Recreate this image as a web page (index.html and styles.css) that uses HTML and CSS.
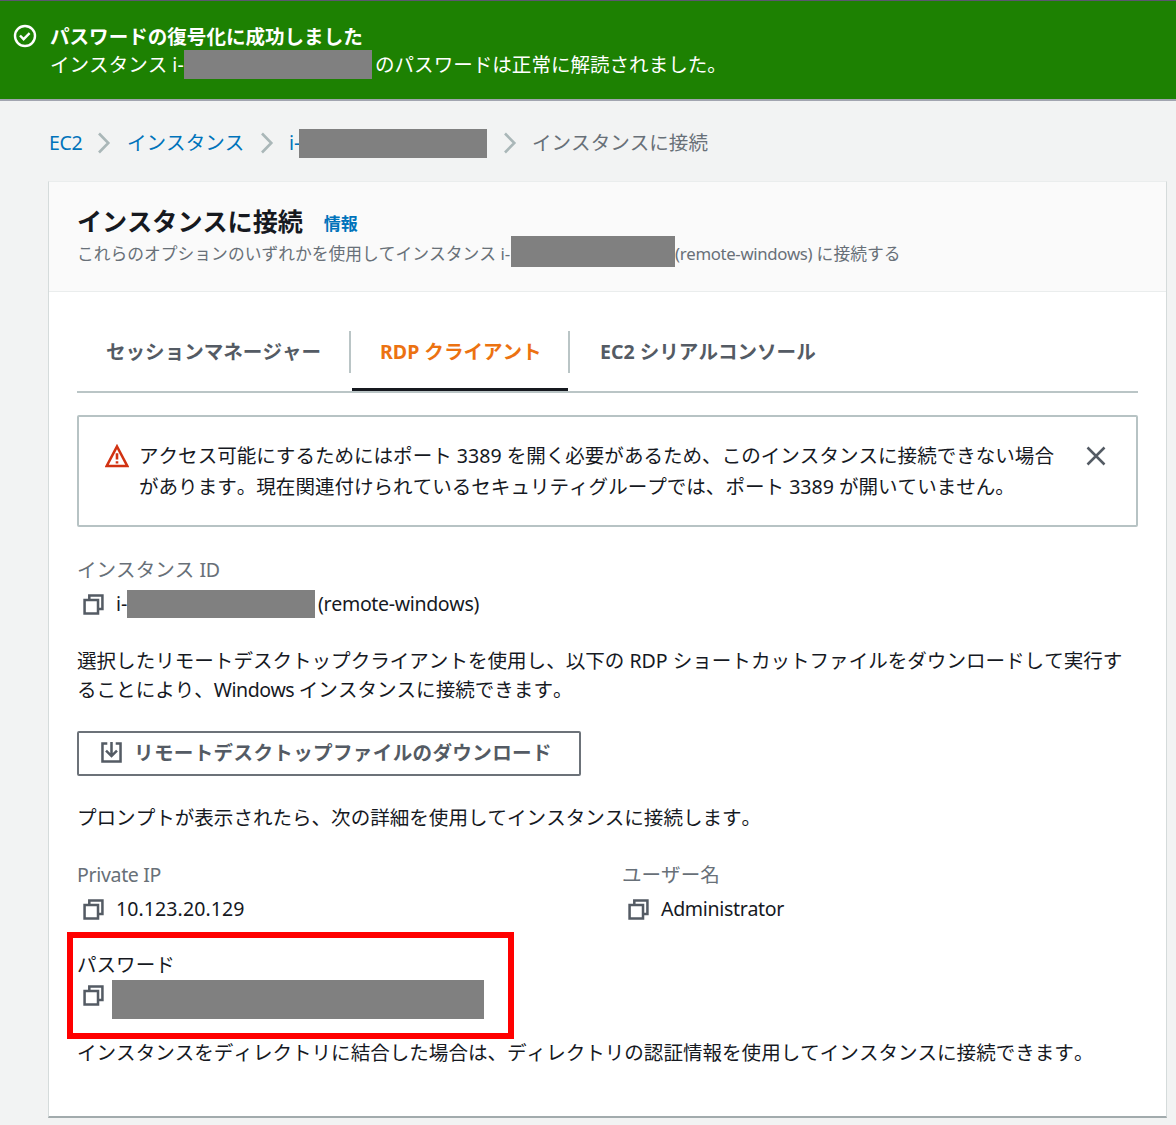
FILE: index.html
```html
<!DOCTYPE html>
<html lang="ja">
<head>
<meta charset="utf-8">
<title>インスタンスに接続</title>
<link rel="stylesheet" href="styles.css">
</head>
<body>
<svg class="sprite" aria-hidden="true">
  <symbol id="copy" viewBox="0 0 20 20"><path d="M1.5 5.7h12.8v12.8H1.5zM6 5V1.5h12.5v12.7h-3.6" fill="none" stroke="#545b64" stroke-width="2.4"/></symbol>
  <symbol id="chevron" viewBox="0 0 14 22"><path d="M2 1.5 11.3 11 2 20.5" fill="none" stroke="#aab7b8" stroke-width="2.6"/></symbol>
</svg>

<div class="flash">
  <svg class="flash-icon" viewBox="0 0 24 24" fill="none" stroke="#fff" stroke-width="2.4"><circle cx="12" cy="12" r="10"/><path d="m7 11.5 3.6 3.7 6-6"/></svg>
  <div class="flash-text">
    <div class="line strong"><span class="t">パスワードの復号化に成功しました</span></div>
    <div class="line"><span class="t flash-lead">インスタンス i-</span><span class="mask mask-flash"></span><span class="t flash-tail">のパスワードは正常に解読されました。</span></div>
  </div>
</div>

<nav class="crumbs">
  <a class="t crumb-ec2">EC2</a>
  <svg class="chevron"><use href="#chevron"/></svg>
  <a class="t crumb-list">インスタンス</a>
  <svg class="chevron"><use href="#chevron"/></svg>
  <a class="t crumb-id">i-</a><span class="mask mask-crumb"></span>
  <svg class="chevron"><use href="#chevron"/></svg>
  <span class="t">インスタンスに接続</span>
</nav>

<main class="card">
  <header class="card-header">
    <div class="title-row"><h1>インスタンスに接続</h1><a class="info">情報</a></div>
    <div class="subtitle"><span class="t sub-lead">これらのオプションのいずれかを使用してインスタンス i-</span><span class="mask mask-sub"></span><span class="t"><span class="latin">(remote-windows)</span> に接続する</span></div>
  </header>

  <div class="card-body">
    <div class="tabs">
      <div class="tab tab-session"><span>セッションマネージャー</span></div>
      <div class="tab tab-rdp active"><span>RDP クライアント</span></div>
      <div class="tab tab-serial"><span>EC2 シリアルコンソール</span></div>
    </div>

    <div class="alert">
      <svg class="alert-icon" viewBox="0 0 24 24"><path d="M12 2.5 22.3 22H1.7z" fill="none" stroke="#d13212" stroke-width="2.6"/><path d="M12 9.2v6.2M12 17.2v2.4" stroke="#d13212" stroke-width="2.6"/></svg>
      <p class="alert-text">アクセス可能にするためにはポート 3389 を開く必要があるため、このインスタンスに接続できない場合<br>があります。現在関連付けられているセキュリティグループでは、ポート 3389 が開いていません。</p>
      <svg class="close" viewBox="0 0 20 20"><path d="m1.5 1.5 17 17m0-17-17 17" stroke="#545b64" stroke-width="2.5"/></svg>
    </div>

    <div class="field field-id">
      <div class="label">インスタンス <span class="latin">ID</span></div>
      <div class="value"><svg class="copy"><use href="#copy"/></svg><span class="t value-id">i-</span><span class="mask mask-id"></span><span class="t value-name latin">(remote-windows)</span></div>
    </div>

    <p class="desc">選択したリモートデスクトップクライアントを使用し、以下の RDP ショートカットファイルをダウンロードして実行す<br>ることにより、<span class="latin">Windows </span>インスタンスに接続できます。</p>

    <button class="download">
      <svg class="download-icon" viewBox="0 0 20 20" fill="none" stroke="#545b64" stroke-width="2.4"><path d="M6 1.5H1.4v17h17.2v-17H14M10 0v13M4.8 8.2l5.2 5.2 5.2-5.2"/></svg>
      <span>リモートデスクトップファイルのダウンロード</span>
    </button>

    <p class="prompt">プロンプトが表示されたら、次の詳細を使用してインスタンスに接続します。</p>

    <div class="columns">
      <div class="field">
        <div class="label latin">Private IP</div>
        <div class="value"><svg class="copy"><use href="#copy"/></svg><span class="t address">10.123.20.129</span></div>
      </div>
      <div class="field">
        <div class="label">ユーザー名</div>
        <div class="value"><svg class="copy"><use href="#copy"/></svg><span class="t latin">Administrator</span></div>
      </div>
    </div>

    <div class="password">
      <div class="password-label">パスワード</div>
      <div class="password-value"><svg class="copy"><use href="#copy"/></svg><span class="mask mask-password"></span></div>
      <div class="highlight"></div>
    </div>

    <p class="note">インスタンスをディレクトリに結合した場合は、ディレクトリの認証情報を使用してインスタンスに接続できます。</p>
  </div>
</main>
</body>
</html>
```
FILE: styles.css
```css
* { box-sizing: border-box; }
body {
  margin: 0;
  height: 1125px;
  overflow: hidden;
  background: #f2f3f3;
  color: #16191f;
  font: 19.56px/28px "Noto Sans", "Noto Sans CJK JP", sans-serif;
  font-kerning: none;
}
h1, p { margin: 0; font-weight: 400; }
svg { flex: none; display: block; }
.sprite { display: none; }
.t { white-space: nowrap; flex: none; }
.latin { letter-spacing: -0.34px; }
.mask { flex: none; background: #808080; }

.flash {
  display: flex;
  height: 101px;
  padding: 21px 0 0 13px;
  border-top: 1px solid #5b5670;
  border-bottom: 2px solid #a2a5b0;
  background: #1d8102;
  color: #fff;
}
.flash-icon { width: 24px; height: 24px; margin: 2px 13px 0 0; }
.flash-text { padding-top: 1px; }
.line { display: flex; align-items: center; height: 28px; }
.strong { font-weight: 700; }
.flash-lead { width: 134px; }
.mask-flash { width: 188px; height: 29px; margin-top: -1px; }
.flash-tail { margin-left: 3px; }

.crumbs {
  display: flex;
  align-items: center;
  height: 80px;
  padding: 4px 0 0 49px;
  color: #687078;
}
.crumbs a { color: #0073bb; }
.chevron { width: 14px; height: 22px; }
.crumb-ec2 { width: 48px; letter-spacing: -0.3px; }
.crumb-ec2 + .chevron { margin-right: 16px; }
.crumb-list { width: 133px; }
.crumb-list + .chevron { margin-right: 15px; }
.crumb-id { width: 10px; }
.mask-crumb { width: 188px; height: 29px; margin-right: 16px; }
.mask-crumb + .chevron { margin-right: 15px; }

.card {
  width: 1119px;
  height: 937px;
  margin-left: 48px;
  border: 1px solid #d5dbdb;
  border-top-color: #eaeded;
  border-bottom: 2px solid #a2abad;
  background: #fff;
}
.card-header {
  height: 110px;
  padding: 22px 0 0 28px;
  border-bottom: 1px solid #eaeded;
  background: #fafafa;
}
.title-row { display: flex; height: 34px; align-items: center; }
h1 { font-size: 25.1px; line-height: 34px; font-weight: 700; }
.info { margin: 5px 0 0 21px; color: #0073bb; font-size: 17px; font-weight: 700; }
.subtitle {
  display: flex;
  align-items: center;
  height: 32px;
  color: #687078;
  font-size: 16.77px;
}
.sub-lead { width: 434px; }
.mask-sub { width: 164px; height: 31px; margin-top: -5px; }

.card-body { padding: 0 28px; }
.tabs {
  display: flex;
  height: 101px;
  padding-top: 39px;
  border-bottom: 2px solid #bac5c6;
  color: #545b64;
  font-weight: 700;
}
.tab { position: relative; height: 42px; line-height: 42px; white-space: nowrap; }
.tab-session { width: 274px; padding-left: 29px; border-right: 2px solid #bac5c6; }
.tab-rdp { width: 219px; padding-left: 29px; border-right: 2px solid #bac5c6; color: #ec7211; }
.tab-serial { padding-left: 30px; }
.active::after {
  content: "";
  position: absolute;
  left: 1px;
  right: 0;
  bottom: -18px;
  height: 3px;
  background: #16191f;
}

.alert {
  display: flex;
  height: 112px;
  margin-top: 22px;
  padding: 24px 30px 0 27px;
  border: 2px solid #b7c3c4;
  border-radius: 2px;
}
.alert-icon { width: 24px; height: 24px; margin: 3px 10px 0 -1px; }
.alert-text { flex: 1; line-height: 30.5px; white-space: nowrap; }
.close { width: 20px; height: 20px; margin-top: 5px; }

.label { height: 30px; color: #687078; }
.value { display: flex; align-items: center; height: 36px; padding-left: 6px; }
.copy { width: 21px; height: 21px; margin-right: 12px; }
.field-id { margin-top: 29px; }
.value-id { width: 11px; }
.mask-id { width: 188px; height: 28px; }
.value-name { margin-left: 3px; }

.desc { margin-top: 25px; line-height: 28.5px; white-space: nowrap; }
.desc .latin { letter-spacing: -0.5px; }
.download {
  display: flex;
  align-items: center;
  width: 504px;
  height: 45px;
  margin-top: 27px;
  padding: 0 0 2px 22px;
  border: 2px solid #6c7279;
  border-radius: 2px;
  background: #fff;
  color: #545b64;
  font: inherit;
  font-weight: 700;
  letter-spacing: 0.35px;
  white-space: nowrap;
}
.download-icon { width: 21px; height: 21px; margin-right: 12px; }
.prompt { margin-top: 28px; }
.columns { display: grid; grid-template-columns: 545px 1fr; margin-top: 29px; }
.address { letter-spacing: 0.08px; }

.password { position: relative; margin-top: 24px; }
.password-label { height: 29px; line-height: 28px; }
.password-value { display: flex; height: 39px; padding-left: 6px; }
.password-value .copy { margin: 5px 8px 0 0; }
.mask-password { width: 372px; }
.highlight {
  position: absolute;
  left: -10px;
  top: -19px;
  width: 447px;
  height: 107px;
  border: 6px solid #f00;
}
.note { margin-top: 20px; white-space: nowrap; }
```
